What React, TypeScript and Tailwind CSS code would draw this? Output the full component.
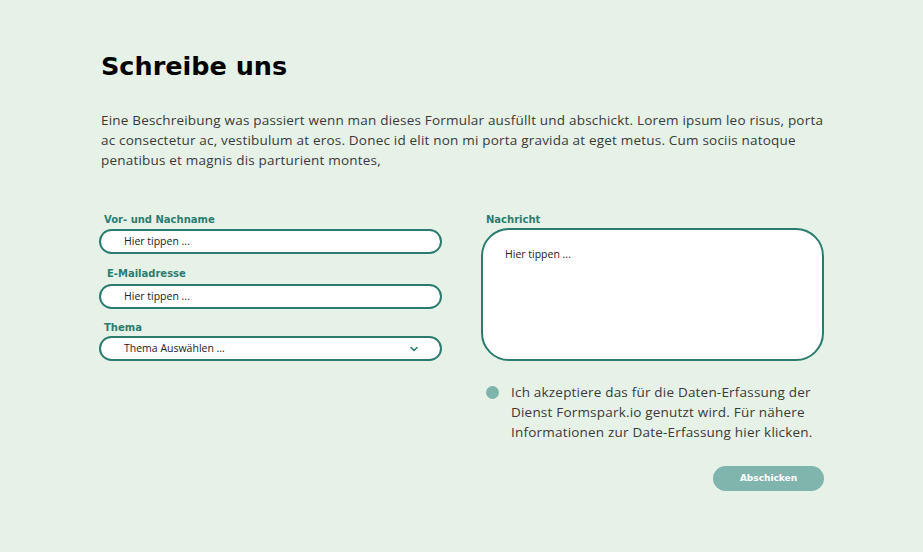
import React from 'react';

const body = "font-['Open_Sans',sans-serif]";
const label = "font-['Verdana','DejaVu_Sans',sans-serif] text-[10px] font-bold text-[#2b7c6f] leading-none";

function Field({ title, indent, gap, children }: { title: string; indent: string; gap: string; children: React.ReactNode }) {
  return (
    <div className="flex flex-col">
      <span className={`${label} ${indent} ${gap}`}>{title}</span>
      {children}
    </div>
  );
}

function TextInput() {
  return (
    <div className="h-[25px] rounded-full border-2 border-[#2b7c6f] bg-white flex items-center pl-[23px]">
      <span className={`${body} text-[10.5px] text-[#222]`}>Hier tippen ...</span>
    </div>
  );
}

export default function App() {
  return (
    <div className="min-h-[552px] w-full bg-[#e6f1e8] text-[#333]">
      <div className="w-[725px] ml-[99px] pt-[49px]">
        <h1 className="ml-[2px] font-['Verdana','DejaVu_Sans',sans-serif] text-[25.5px] font-bold text-black leading-[34px]">
          Schreibe uns
        </h1>
        <p className={`${body} ml-[2px] mt-[27px] text-[13.5px] leading-[20px] tracking-[0.2px] text-[#3a3a3a]`}>
          Eine Beschreibung was passiert wenn man dieses Formular ausfüllt und abschickt. Lorem ipsum leo risus, porta ac
          consectetur ac, vestibulum at eros. Donec id elit non mi porta gravida at eget metus. Cum sociis natoque
          penatibus et magnis dis parturient montes,
        </p>

        <div className="mt-[45px] grid grid-cols-[343px_343px] gap-x-[39px]">
          <div className="flex flex-col">
            <Field title="Vor- und Nachname" indent="ml-[5px]" gap="mb-[4px]">
              <TextInput />
            </Field>
            <div className="mt-[15px]">
              <Field title="E-Mailadresse" indent="ml-[8px]" gap="mb-[5px]">
                <TextInput />
              </Field>
            </div>
            <div className="mt-[14px]">
              <Field title="Thema" indent="ml-[5px]" gap="mb-[3px]">
                <div className="h-[25px] rounded-full border-2 border-[#2b7c6f] bg-white flex items-center justify-between pl-[23px] pr-[22px]">
                  <span className={`${body} text-[10.5px] text-[#222]`}>Thema Auswählen ...</span>
                  <svg width="8" height="6" viewBox="0 0 8 6" fill="none">
                    <path d="M1 1.5l3 3 3-3" stroke="#2b7c6f" strokeWidth="1.6" strokeLinecap="round" strokeLinejoin="round" />
                  </svg>
                </div>
              </Field>
            </div>
          </div>

          <div className="flex flex-col">
            <Field title="Nachricht" indent="ml-[5px]" gap="mb-[3px]">
              <div className="h-[133px] rounded-[28px] border-2 border-[#2b7c6f] bg-white pl-[22px] pr-[23px] pt-[10px]">
                <span className={`${body} text-[10.5px] text-[#222]`}>Hier tippen ...</span>
              </div>
            </Field>

            <div className="mt-[21px] flex items-start gap-[12px] pl-[5px]">
              <span className="mt-[4px] w-[13px] h-[13px] rounded-full bg-[#7fb4ab] shrink-0" />
              <p className={`${body} text-[13.5px] leading-[20px] tracking-[0.2px] text-[#3a3a3a]`}>
                Ich akzeptiere das für die Daten-Erfassung der Dienst Formspark.io genutzt wird. Für nähere
                Informationen zur Date-Erfassung hier klicken.
              </p>
            </div>

            <div className="mt-[24px] flex justify-end">
              <button className="w-[111px] h-[25px] rounded-full bg-[#80b5ad] text-white font-['Verdana','DejaVu_Sans',sans-serif] text-[9px] font-bold">
                Abschicken
              </button>
            </div>
          </div>
        </div>
      </div>
    </div>
  );
}
